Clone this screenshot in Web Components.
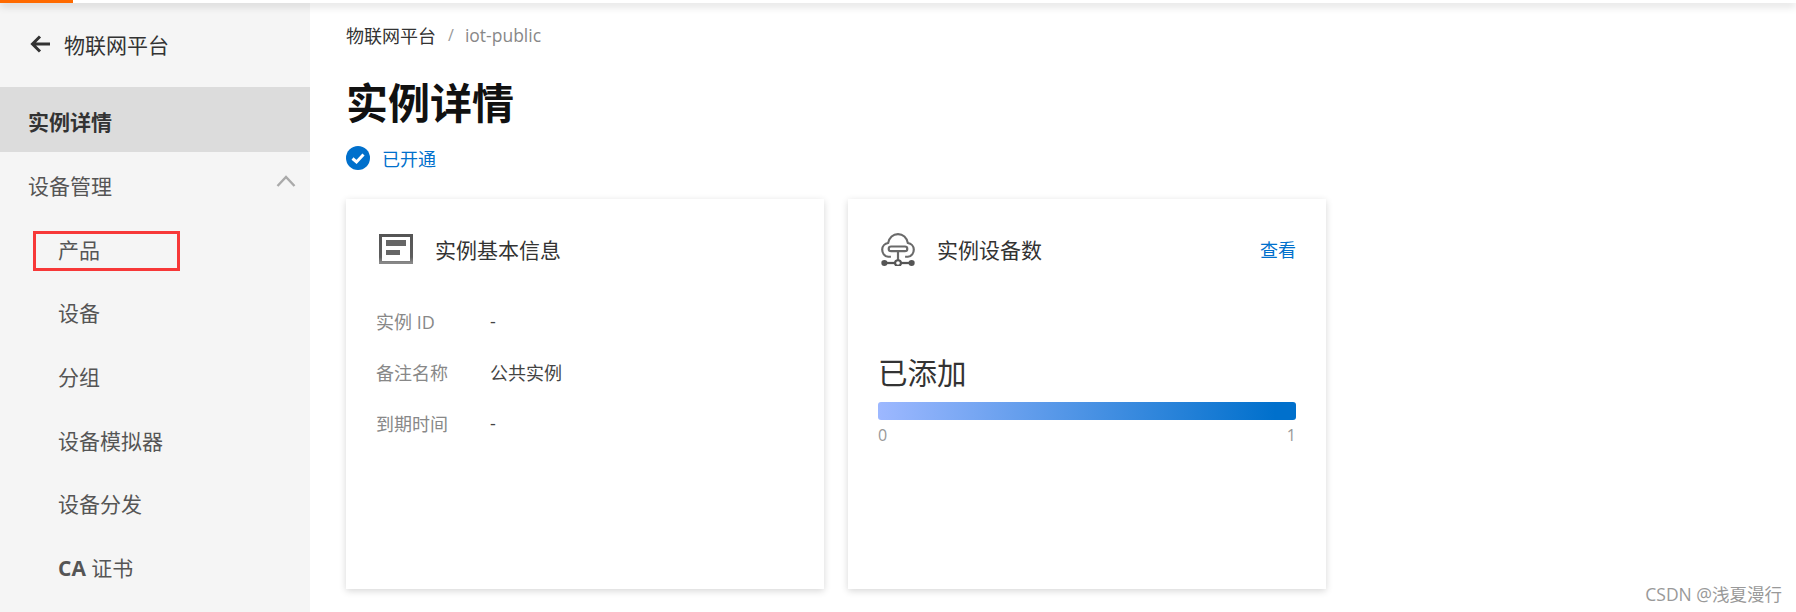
<!DOCTYPE html>
<html lang="zh">
<head>
<meta charset="utf-8">
<title>实例详情</title>
<style>
  html, body { margin: 0; height: 100%; overflow: hidden; background: #fff; }
  body { font-family: "Open Sans", "Noto Sans CJK SC", sans-serif; color: #333; }
</style>
</head>
<body>
<top-bar></top-bar>
<app-shell>
  <side-bar slot="side" heading="物联网平台">
    <side-item active>实例详情</side-item>
    <side-item open>设备管理</side-item>
    <side-item sub marked>产品</side-item>
    <side-item sub>设备</side-item>
    <side-item sub>分组</side-item>
    <side-item sub>设备模拟器</side-item>
    <side-item sub>设备分发</side-item>
    <side-item sub><b>CA</b> 证书</side-item>
  </side-bar>
  <page-head crumb="物联网平台" current="iot-public" heading="实例详情" status="已开通"></page-head>
  <card-row>
    <info-card heading="实例基本信息" icon="doc">
      <info-row label="实例 ID">-</info-row>
      <info-row label="备注名称">公共实例</info-row>
      <info-row label="到期时间">-</info-row>
    </info-card>
    <info-card heading="实例设备数" icon="cloud" action="查看">
      <usage-bar label="已添加" min="0" max="1"></usage-bar>
    </info-card>
  </card-row>
</app-shell>
<water-mark>CSDN @浅夏漫行</water-mark>

<script>
  class TopBar extends HTMLElement {
    constructor() {
      super();
      this.attachShadow({ mode: 'open' }).innerHTML = `
        <style>
          :host { display: block; position: absolute; top: 0; left: 0; right: 0; height: 3px; background: #fff; box-shadow: 0 2px 8px rgba(0,0,0,.28); z-index: 5; }
          .load { display: block; width: 73px; height: 3px; background: #ff6a00; }
        </style>
        <span class="load"></span>
      `;
    }
  }
  customElements.define('top-bar', TopBar);

  class AppShell extends HTMLElement {
    constructor() {
      super();
      this.attachShadow({ mode: 'open' }).innerHTML = `
        <style>
          :host { display: grid; grid-template-columns: 310px 1fr; height: 612px; }
          main { padding: 0 36px; min-width: 0; }
        </style>
        <slot name="side"></slot>
        <main><slot></slot></main>
      `;
    }
  }
  customElements.define('app-shell', AppShell);

  class SideBar extends HTMLElement {
    constructor() {
      super();
      this.attachShadow({ mode: 'open' }).innerHTML = `
        <style>
          :host { display: block; background: #f5f5f5; height: 612px; overflow: hidden; }
          header { display: flex; align-items: center; gap: 14px; height: 87px; padding: 0 0 0 30px; box-sizing: border-box; font-size: 21px; color: #333; }
          svg { display: block; }
        </style>
        <header>
          <svg width="20" height="18" viewBox="0 0 20 18" fill="none" stroke="#333" stroke-width="3"><path d="M20 9H3M10 1.500 2.500 9l7.500 7.500"/></svg>
          <span id="h"></span>
        </header>
        <slot></slot>
      `;
    }
    connectedCallback() {
      this.shadowRoot.getElementById('h').textContent = this.getAttribute('heading');
    }
  }
  customElements.define('side-bar', SideBar);

  class SideItem extends HTMLElement {
    constructor() {
      super();
      this.attachShadow({ mode: 'open' }).innerHTML = `
        <style>
          :host { display: flex; align-items: center; position: relative; box-sizing: border-box; height: 63.6px; padding: 3px 0 0 28px; font-size: 21px; color: #555; }
          :host([active]) { height: 65px; background: #dcdcdc; color: #333; font-weight: 700; }
          :host([sub]) { padding-left: 58px; }
          .arrow { display: none; position: absolute; right: 14px; top: 23px; }
          :host([open]) .arrow { display: block; }
          .mark { display: none; position: absolute; left: 33px; top: 15px; width: 147px; height: 40px; box-sizing: border-box; border: 3px solid #f73838; }
          :host([marked]) .mark { display: block; }
        </style>
        <span><slot></slot></span>
        <svg class="arrow" width="20" height="12" viewBox="0 0 20 12" fill="none" stroke="#aaa" stroke-width="2.400"><path d="M1.500 11 10 2l8.500 9"/></svg>
        <span class="mark"></span>
      `;
    }
  }
  customElements.define('side-item', SideItem);

  class PageHead extends HTMLElement {
    constructor() {
      super();
      this.attachShadow({ mode: 'open' }).innerHTML = `
        <style>
          :host { display: block; }
          nav { display: flex; align-items: center; height: 26px; padding-top: 22px; font-size: 18px; color: #333; }
          nav i { font-style: normal; color: #999; margin: 0 11px 0 12px; font-size: 16px; }
          nav .cur { color: #888; font-size: 17.500px; }
          h1 { margin: 0; padding-top: 24px; height: 62px; line-height: 62px; font-size: 42px; font-weight: 700; color: #111; }
          .status { display: flex; align-items: center; gap: 12px; height: 28px; margin-top: 10px; font-size: 18px; color: #0070cc; }
          svg { display: block; }
        </style>
        <nav><span id="c"></span><i>/</i><span class="cur" id="u"></span></nav>
        <h1 id="t"></h1>
        <div class="status">
          <svg width="24" height="24" viewBox="0 0 24 24"><circle cx="12" cy="12" r="12" fill="#0070cc"/><path d="M6.500 12.500 10.500 16l7-7.500" fill="none" stroke="#fff" stroke-width="3"/></svg>
          <span id="s"></span>
        </div>
      `;
    }
    connectedCallback() {
      const r = this.shadowRoot;
      r.getElementById('c').textContent = this.getAttribute('crumb');
      r.getElementById('u').textContent = this.getAttribute('current');
      r.getElementById('t').textContent = this.getAttribute('heading');
      r.getElementById('s').textContent = this.getAttribute('status');
    }
  }
  customElements.define('page-head', PageHead);

  class CardRow extends HTMLElement {
    constructor() {
      super();
      this.attachShadow({ mode: 'open' }).innerHTML = `
        <style>
          :host { display: flex; gap: 24px; margin-top: 27px; }
        </style>
        <slot></slot>
      `;
    }
  }
  customElements.define('card-row', CardRow);

  const cardIcons = {
    doc: `<svg width="34" height="30" viewBox="0 0 34 30">
        <defs><linearGradient id="g" x1="0" y1="0" x2="0" y2="1"><stop offset="0" stop-color="#555"/><stop offset=".8" stop-color="#5e5e5e"/><stop offset="1" stop-color="#888"/></linearGradient></defs>
        <rect x="1.500" y="1.500" width="31" height="27" fill="#fff" stroke="url(#g)" stroke-width="3"/>
        <rect x="7" y="6" width="20" height="6" fill="#666"/>
        <rect x="7" y="16" width="14" height="5" fill="#666"/>
      </svg>`,
    cloud: `<svg width="36" height="33" viewBox="2.900 2.400 31.200 32" preserveAspectRatio="none" style="margin-top:1px" fill="none" stroke="#6a6a6a" stroke-width="2">
        <path d="M12 25.500H9.500C6 25 4 22 4 18.500 4 15 6.500 12.500 9.500 12 10.500 7 14 3.500 18.500 3.500S26.500 7 27.500 12C30.500 12.500 33 15 33 18.500 33 22 31 25 27.500 25.500H25"/>
        <rect x="10" y="15.500" width="17" height="4.500" rx="2.200"/>
        <path d="M18.500 20v8.500"/>
        <path d="M6 31.500h25" stroke-width="2.200" stroke="#555"/>
        <circle cx="18.500" cy="31.500" r="2.700" fill="#fff" stroke="#555"/>
        <circle cx="6" cy="31.500" r="2.800" fill="#555" stroke="none"/>
        <circle cx="31" cy="31.500" r="2.800" fill="#555" stroke="none"/>
      </svg>`
  };

  class InfoCard extends HTMLElement {
    constructor() {
      super();
      this.attachShadow({ mode: 'open' }).innerHTML = `
        <style>
          :host { display: block; width: 478px; height: 390px; box-sizing: border-box; padding: 0 30px; background: #fff; box-shadow: 0 2px 7px rgba(0,0,0,.16); }
          header { display: flex; align-items: center; box-sizing: border-box; height: 96px; padding: 3px 0 0 3px; font-size: 21px; color: #333; }
          .ico { width: 34px; display: flex; justify-content: center; margin-right: 22px; }
          h2 { flex: 1; margin: 0; font: inherit; }
          a { font-size: 18px; color: #0070cc; }
        </style>
        <header>
          <span class="ico" id="i"></span>
          <h2 id="t"></h2>
          <a id="a"></a>
        </header>
        <slot></slot>
      `;
    }
    connectedCallback() {
      const r = this.shadowRoot;
      r.getElementById('i').innerHTML = cardIcons[this.getAttribute('icon')];
      r.getElementById('t').textContent = this.getAttribute('heading');
      r.getElementById('a').textContent = this.getAttribute('action') || '';
    }
  }
  customElements.define('info-card', InfoCard);

  class InfoRow extends HTMLElement {
    constructor() {
      super();
      this.attachShadow({ mode: 'open' }).innerHTML = `
        <style>
          :host { display: flex; align-items: center; height: 51px; font-size: 18px; color: #444; }
          span { width: 114px; color: #888; }
        </style>
        <span id="l"></span><slot></slot>
      `;
    }
    connectedCallback() {
      this.shadowRoot.getElementById('l').textContent = this.getAttribute('label');
    }
  }
  customElements.define('info-row', InfoRow);

  class UsageBar extends HTMLElement {
    constructor() {
      super();
      this.attachShadow({ mode: 'open' }).innerHTML = `
        <style>
          :host { display: block; padding-top: 57px; }
          .lbl { height: 42px; line-height: 42px; font-size: 29.500px; color: #333; }
          .bar { height: 18px; margin-top: 8px; border-radius: 3px; background: linear-gradient(90deg, #9db8ff, #0070cc 95%); }
          .ends { display: flex; justify-content: space-between; margin-top: 4px; font-size: 16px; color: #999; }
        </style>
        <div class="lbl" id="l"></div>
        <div class="bar"></div>
        <div class="ends"><span id="a"></span><span id="b"></span></div>
      `;
    }
    connectedCallback() {
      const r = this.shadowRoot;
      r.getElementById('l').textContent = this.getAttribute('label');
      r.getElementById('a').textContent = this.getAttribute('min');
      r.getElementById('b').textContent = this.getAttribute('max');
    }
  }
  customElements.define('usage-bar', UsageBar);

  class WaterMark extends HTMLElement {
    constructor() {
      super();
      this.attachShadow({ mode: 'open' }).innerHTML = `
        <style>
          :host { display: block; position: absolute; right: 14px; top: 582px; font-size: 17.500px; line-height: 24px; color: #999; }
        </style>
        <slot></slot>
      `;
    }
  }
  customElements.define('water-mark', WaterMark);
</script>
</body>
</html>
